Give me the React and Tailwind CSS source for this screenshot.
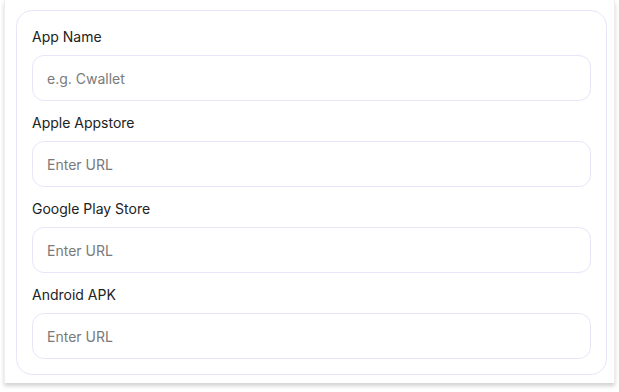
import React from "react";

const fields = [
  { label: "App Name", placeholder: "e.g. Cwallet" },
  { label: "Apple Appstore", placeholder: "Enter URL" },
  { label: "Google Play Store", placeholder: "Enter URL" },
  { label: "Android APK", placeholder: "Enter URL" },
];

const App = () => {
  return (
    <div className="w-[619px] h-[392px] bg-white overflow-hidden" style={{ fontFamily: "Inter, sans-serif" }}>
      <div className="ml-[4px] w-[611px] h-[383px] bg-white border-l border-r border-[#eeeeee] shadow-[0_3px_4px_rgba(0,0,0,0.18)] pt-[10px] pl-[11px]">
        <div className="w-[591px] rounded-[16px] border border-[#e9e5f9] bg-white px-[15px] pt-[16px] pb-[15px] flex flex-col gap-[12px]">
          {fields.map((f) => (
            <div key={f.label} className="flex flex-col gap-[8px]">
              <label className="text-[14px] leading-[20px] text-[#222222]">{f.label}</label>
              <input
                type="text"
                placeholder={f.placeholder}
                className="h-[46px] w-full rounded-[12px] border border-[#e9e5f9] bg-white px-[14px] text-[14px] text-[#222222] placeholder:text-[#7a7a7a] outline-none"
              />
            </div>
          ))}
        </div>
      </div>
    </div>
  );
};

export default App;
